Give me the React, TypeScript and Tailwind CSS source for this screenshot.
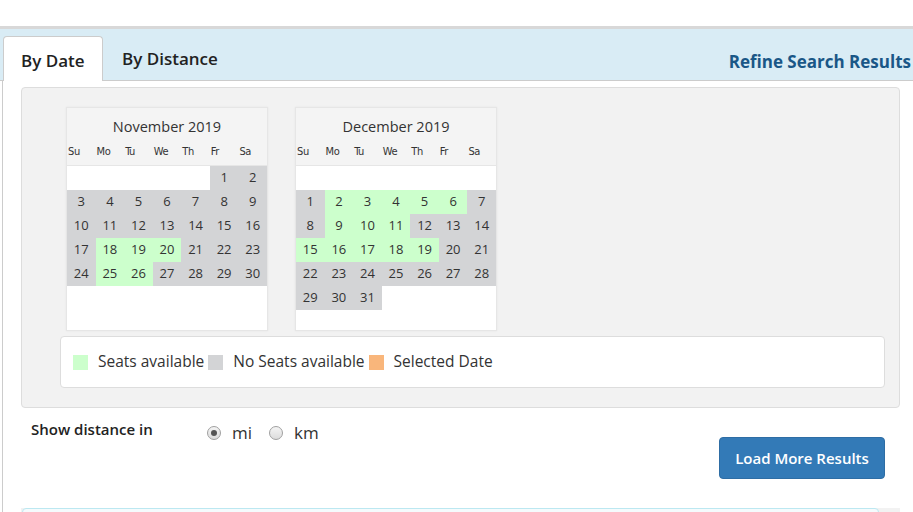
import React from "react";

type Month = {
  title: string;
  lead: number; // blank cells before day 1
  days: number;
  green: number[];
};

const WEEKDAYS = ["Su", "Mo", "Tu", "We", "Th", "Fr", "Sa"];

const MONTHS: Month[] = [
  { title: "November 2019", lead: 5, days: 30, green: [18, 19, 20, 25, 26] },
  {
    title: "December 2019",
    lead: 7,
    days: 31,
    green: [2, 3, 4, 5, 6, 9, 10, 11, 15, 16, 17, 18, 19],
  },
];

const Calendar = ({ month }: { month: Month }) => {
  const cells: (number | null)[] = [];
  for (let i = 0; i < month.lead; i++) cells.push(null);
  for (let d = 1; d <= month.days; d++) cells.push(d);
  while (cells.length % 7 !== 0) cells.push(null);

  return (
    <div className="w-[202px] h-[224px] bg-white border border-[#e6e6e6] shadow-[0_0_2px_rgba(0,0,0,0.06)]">
      <div className="bg-[#f4f4f4] h-[58px] border-b border-[#e6e6e6]">
        <div className="text-[14.5px] text-[#333] text-center pt-[9px] leading-[20px]">
          {month.title}
        </div>
        <div className="grid grid-cols-7 mt-[8px]">
          {WEEKDAYS.map((w) => (
            <div
              key={w}
              className="text-[11px] leading-[13px] text-[#333] pl-[1px] font-['DejaVu_Sans_Condensed','DejaVu_Sans',sans-serif] tracking-[-0.4px]"
            >
              {w}
            </div>
          ))}
        </div>
      </div>
      <div className="grid grid-cols-7">
        {cells.map((d, i) =>
          d === null ? (
            <div key={i} className="h-[24px] bg-white" />
          ) : (
            <div
              key={i}
              className={`h-[24px] flex items-center justify-center text-[13px] text-[#333] ${
                month.green.includes(d) ? "bg-[#ccffcc]" : "bg-[#d3d4d6]"
              }`}
            >
              {d}
            </div>
          )
        )}
      </div>
    </div>
  );
};

const LegendItem = ({ color, label }: { color: string; label: string }) => (
  <div className="flex items-center">
    <span className={`w-[15px] h-[15px] ${color} mr-[10px]`} />
    <span className="mr-[4px]">{label}</span>
  </div>
);

const Radio = ({ checked, label }: { checked?: boolean; label: string }) => (
  <label className="flex items-center mr-[17px]">
    <span className="w-[14px] h-[14px] rounded-full border border-[#a0a0a0] bg-gradient-to-b from-[#f4f4f4] to-[#dcdcdc] flex items-center justify-center mr-[11px]">
      {checked && <span className="w-[6px] h-[6px] rounded-full bg-[#555]" />}
    </span>
    <span className="text-[17px] text-[#333] leading-[20px]">{label}</span>
  </label>
);

export default function App() {
  return (
    <div className="w-[913px] h-[512px] overflow-hidden bg-white font-['Open_Sans',sans-serif] text-[#333]">
      <div className="h-[26px]" />
      <div className="h-[55px] border-t-[3px] border-[#d8d8d8] border-b border-b-[#cccccc] bg-[#d9ecf5] flex items-end pl-[3px]">
        <div className="w-[100px] h-[45px] -mb-px bg-white border border-[#cccccc] border-b-0 rounded-t-[4px] flex items-center pl-[17px] pt-[3px]">
          <span className="text-[17px] font-semibold text-[#222]">By Date</span>
        </div>
        <div className="h-[44px] flex items-center pl-[19px] pt-[2px]">
          <span className="text-[17px] font-semibold text-[#222]">By Distance</span>
        </div>
        <div className="ml-auto h-[40px] flex items-center pr-[2px] pt-[3px]">
          <span className="text-[17px] font-bold text-[#1a5787]">
            Refine Search Results
          </span>
        </div>
      </div>

      <div className="ml-[2px] border-l border-[#cccccc] pl-[18px] pt-[6px]">
        <div className="w-[879px] h-[321px] bg-[#f2f2f2] border border-[#dddddd] rounded-[4px] pt-[19px]">
          <div className="flex gap-[27px] pl-[44px]">
            {MONTHS.map((m) => (
              <Calendar key={m.title} month={m} />
            ))}
          </div>
          <div className="ml-[38px] mr-[14px] mt-[5px] h-[52px] bg-white border border-[#dddddd] rounded-[4px] flex items-center pl-[12px] text-[15.5px] text-[#333]">
            <LegendItem color="bg-[#ccffcc]" label="Seats available" />
            <LegendItem color="bg-[#d3d4d6]" label="No Seats available" />
            <LegendItem color="bg-[#f9b67b]" label="Selected Date" />
          </div>
        </div>

        <div className="w-[879px] flex h-[100px]">
          <div className="pl-[10px] pt-[10px] w-[186px] text-[15px] font-semibold text-[#222]">
            Show distance in
          </div>
          <div className="flex pt-[15px] h-fit">
            <Radio checked label="mi" />
            <Radio label="km" />
          </div>
          <button className="ml-auto mr-[15px] mt-[29px] w-[166px] h-[42px] rounded-[4px] bg-[#337ab7] border border-[#2e6da4] text-white text-[15px] font-semibold">
            Load More Results
          </button>
        </div>

        <div className="w-[879px] h-[10px] bg-[#f2f2f2]">
          <div className="w-[857px] ml-px h-full border border-[#bce8f1] rounded-[4px] bg-[#f5fbfd]" />
        </div>
      </div>
    </div>
  );
}
